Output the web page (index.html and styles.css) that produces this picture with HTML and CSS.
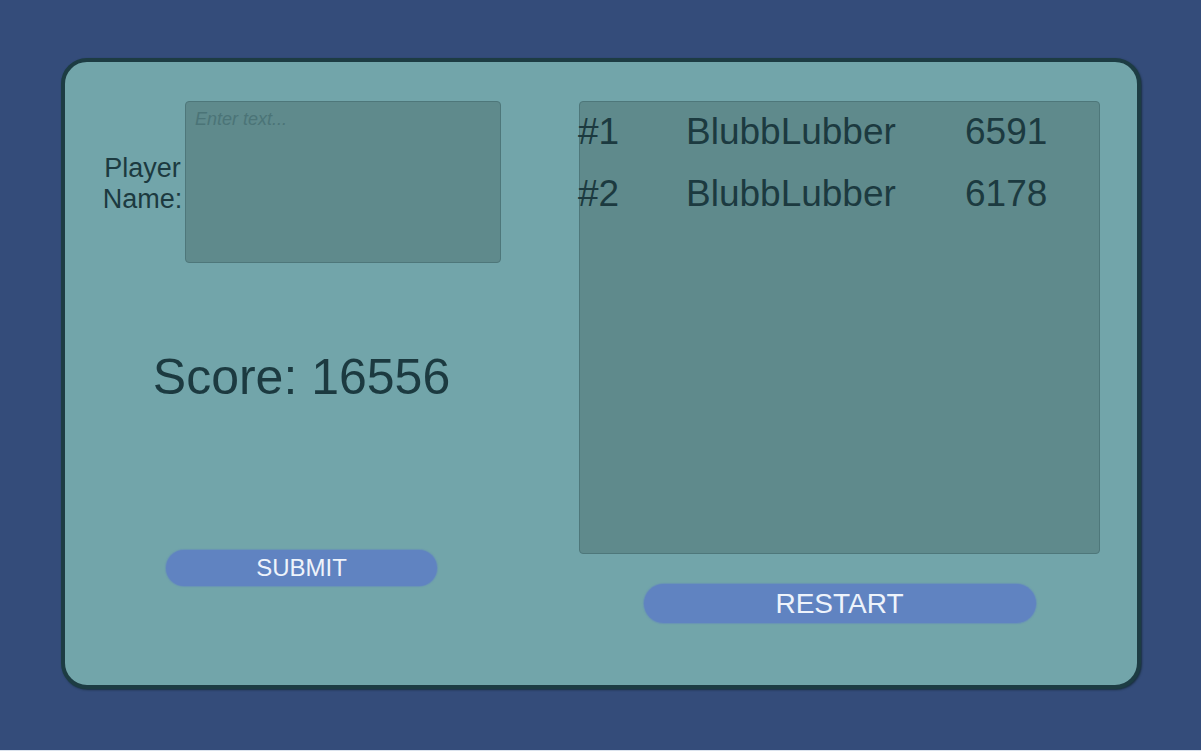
FILE: index.html
```html
<!DOCTYPE html>
<html lang="en">
<head>
	<meta charset="UTF-8">
	<title>Game Over</title>
	<link rel="stylesheet" href="styles.css">
</head>
<body>
	<div class="panel">
		<div class="left">
			<div class="name-row">
				<label class="name-label" for="player">Player<br>Name:</label>
				<textarea class="name-input" id="player" placeholder="Enter text..."></textarea>
			</div>
			<div class="score">Score: 16556</div>
			<button class="btn submit">SUBMIT</button>
		</div>
		<div class="right">
			<div class="board">
				<ol class="ranks">
					<li><span>#1</span><span>BlubbLubber</span><span>6591</span></li>
					<li><span>#2</span><span>BlubbLubber</span><span>6178</span></li>
				</ol>
			</div>
			<button class="btn restart">RESTART</button>
		</div>
	</div>
</body>
</html>
```

FILE: styles.css
```css
*{
	margin: 0px;
	padding: 0px;
	box-sizing: border-box;
}
html{
	background-color: #dbe3ee;
}
body{
	height: 750px;
	background-color: #344c7a;
	display: flex;
	align-items: center;
	justify-content: center;
	font-family: "Liberation Sans", Arial, sans-serif;
	color: #1c3a40;
}
ol{
	list-style: none;
}

/* main card */
.panel{
	width: 1080px;
	height: 631px;
	margin-left: 1px;
	margin-bottom: 3px;
	background-color: #72a5aa;
	border: 4px solid #1d3c43;
	border-radius: 26px;
	box-shadow: 1px 1px 2px rgba(20, 40, 50, 0.8);
	padding: 39px 37px 0 37px;
	display: grid;
	grid-template-columns: 399px 521px;
	column-gap: 78px;
	align-items: start;
}

/* left side: name entry, score, submit */
.left{
	display: flex;
	flex-direction: column;
	align-items: center;
}
.name-row{
	width: 100%;
	display: flex;
	align-items: center;
	gap: 2px;
}
.name-label{
	flex: 1;
	padding-top: 3px;
	text-align: center;
	font-size: 27px;
	line-height: 31px;
}
.name-input{
	width: 316px;
	height: 162px;
	resize: none;
	overflow: hidden;
	background-color: #5f8a8c;
	border: 1px solid #4e777a;
	border-radius: 4px;
	padding: 7px 9px;
	font-family: "Liberation Sans", Arial, sans-serif;
	font-size: 18px;
	font-style: italic;
	color: #1c3a40;
	outline: none;
}
.name-input::placeholder{
	color: #4b7477;
	opacity: 1;
}
.score{
	margin-top: 84px;
	font-size: 50px;
	line-height: 60px;
}

/* buttons */
.btn{
	border: none;
	border-radius: 20px;
	background-color: #6083c1;
	color: #eef3fb;
	font-family: "Liberation Sans", Arial, sans-serif;
	box-shadow: 0 0 1px 1px rgba(96, 131, 193, 0.5);
}
.submit{
	margin-top: 143px;
	width: 271px;
	height: 36px;
	font-size: 24px;
}
.restart{
	margin-top: 30px;
	width: 392px;
	height: 39px;
	font-size: 28px;
}

/* right side: high score list */
.right{
	display: flex;
	flex-direction: column;
	align-items: center;
}
.board{
	width: 521px;
	height: 453px;
	background-color: #5f8a8c;
	border: 1px solid #4e777a;
	border-radius: 4px;
}
.ranks{
	margin-left: -2px;
	display: flex;
	flex-direction: column;
	gap: 2px;
}
.ranks>li{
	display: grid;
	grid-template-columns: 108px 279px auto;
	font-size: 37px;
	line-height: 60px;
}
```
